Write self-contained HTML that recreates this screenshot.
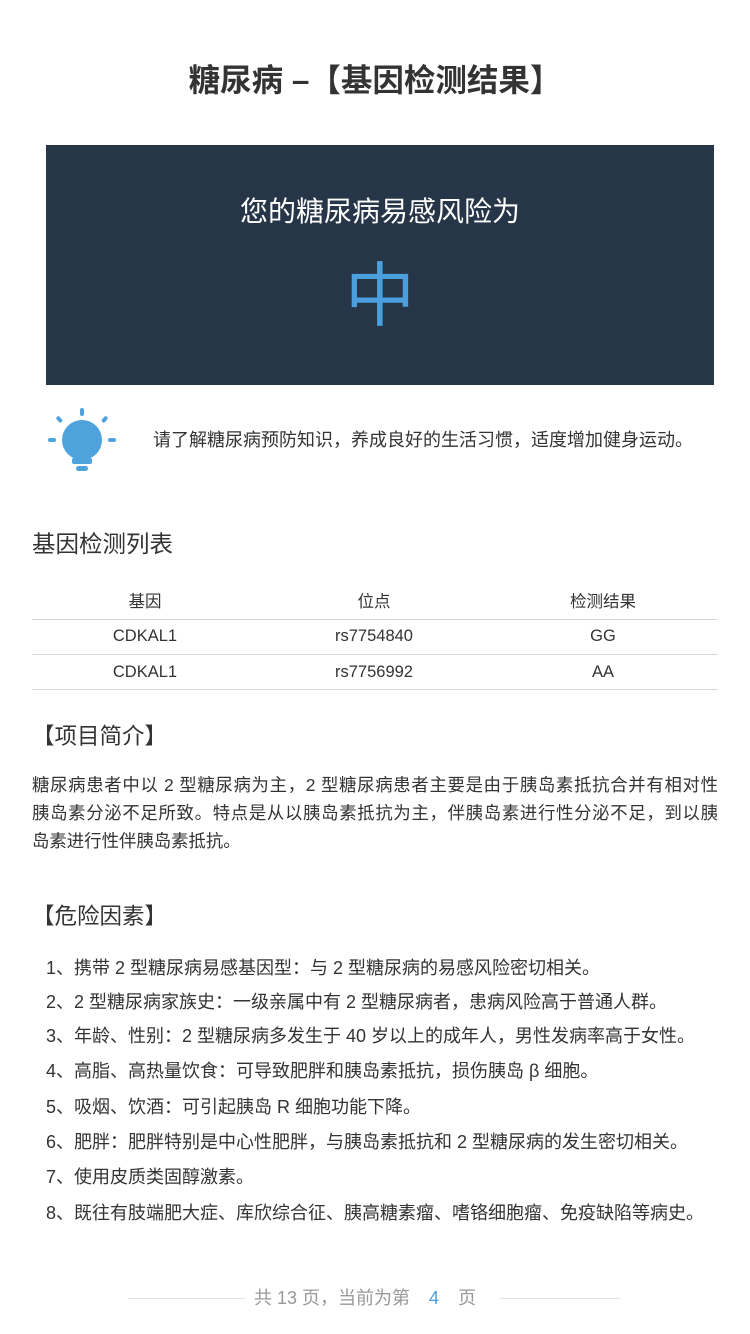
<!DOCTYPE html>
<html><head><meta charset="utf-8"><style>
*{margin:0;padding:0;box-sizing:border-box}
body{width:750px;height:1334px;background:#fff;position:relative;font-family:"Liberation Sans","Noto Sans CJK SC",sans-serif;color:#333;overflow:hidden}
.a{position:absolute;white-space:nowrap}
.box{position:absolute;left:46px;top:145px;width:668px;height:240px;background:#263547}
.jl{position:absolute;left:32px;width:686px;font-size:17.4px;text-align:justify;text-align-last:justify;white-space:nowrap;line-height:28px;color:#333}
.li{position:absolute;left:46px;font-size:18px;line-height:24px;color:#333;white-space:nowrap}
.line{position:absolute;left:32px;width:686px;height:1px;background:#d8d8d8}
.c{position:absolute;font-size:16.5px;text-align:center;width:200px;line-height:22px;color:#333}
</style></head><body>
<div class="a" style="left:0;width:750px;text-align:center;top:61px;font-size:31.5px;font-weight:bold;color:#333;line-height:38px">糖尿病 –【基因检测结果】</div>
<div class="box"></div>
<div class="a" style="left:46px;width:668px;text-align:center;top:194px;font-size:28px;color:#fff;line-height:36px">您的糖尿病易感风险为</div>
<div class="a" style="left:46px;width:668px;text-align:center;top:258px;font-size:70px;color:#4a9fdc;line-height:76px">中</div>
<svg style="position:absolute;left:45px;top:408px" width="72" height="66" viewBox="0 0 72 66">
<g fill="#4fa3dd">
<circle cx="37" cy="32" r="20"/>
<rect x="27" y="50" width="20" height="6" rx="2"/>
<rect x="31" y="58" width="12" height="5" rx="2.5"/>
<rect x="35" y="0" width="4" height="8" rx="2"/>
<rect x="3" y="30" width="8" height="4" rx="2"/>
<rect x="63" y="30" width="8" height="4" rx="2"/>
<rect x="12" y="8" width="4" height="7" rx="2" transform="rotate(-40 14 11)"/>
<rect x="58" y="8" width="4" height="7" rx="2" transform="rotate(40 60 11)"/>
</g></svg>
<div class="a" style="left:153px;top:428px;font-size:18px;line-height:24px;color:#333">请了解糖尿病预防知识，养成良好的生活习惯，适度增加健身运动。</div>
<div class="a" style="left:32px;top:529px;font-size:23.5px;line-height:30px;color:#333">基因检测列表</div>
<div class="c" style="left:45px;top:591px">基因</div>
<div class="c" style="left:274px;top:591px">位点</div>
<div class="c" style="left:503px;top:591px">检测结果</div>
<div class="line" style="top:619px"></div>
<div class="c" style="left:45px;top:625px">CDKAL1</div>
<div class="c" style="left:274px;top:625px">rs7754840</div>
<div class="c" style="left:503px;top:625px">GG</div>
<div class="line" style="top:654px"></div>
<div class="c" style="left:45px;top:661px">CDKAL1</div>
<div class="c" style="left:274px;top:661px">rs7756992</div>
<div class="c" style="left:503px;top:661px">AA</div>
<div class="line" style="top:689px"></div>
<div class="a" style="left:32px;top:723px;font-size:22.5px;line-height:28px">【项目简介】</div>
<div class="jl" style="top:771px">糖尿病患者中以 2 型糖尿病为主，2 型糖尿病患者主要是由于胰岛素抵抗合并有相对性</div>
<div class="jl" style="top:799px">胰岛素分泌不足所致。特点是从以胰岛素抵抗为主，伴胰岛素进行性分泌不足，到以胰</div>
<div class="jl" style="top:827px;text-align-last:left;width:auto">岛素进行性伴胰岛素抵抗。</div>
<div class="a" style="left:32px;top:903px;font-size:22.5px;line-height:28px">【危险因素】</div>
<div class="li" style="top:956px">1、携带 2 型糖尿病易感基因型：与 2 型糖尿病的易感风险密切相关。</div>
<div class="li" style="top:990px">2、2 型糖尿病家族史：一级亲属中有 2 型糖尿病者，患病风险高于普通人群。</div>
<div class="li" style="top:1024px">3、年龄、性别：2 型糖尿病多发生于 40 岁以上的成年人，男性发病率高于女性。</div>
<div class="li" style="top:1059px">4、高脂、高热量饮食：可导致肥胖和胰岛素抵抗，损伤胰岛 β 细胞。</div>
<div class="li" style="top:1095px">5、吸烟、饮酒：可引起胰岛 R 细胞功能下降。</div>
<div class="li" style="top:1130px">6、肥胖：肥胖特别是中心性肥胖，与胰岛素抵抗和 2 型糖尿病的发生密切相关。</div>
<div class="li" style="top:1165px">7、使用皮质类固醇激素。</div>
<div class="li" style="top:1201px">8、既往有肢端肥大症、库欣综合征、胰高糖素瘤、嗜铬细胞瘤、免疫缺陷等病史。</div>
<div style="position:absolute;left:128px;top:1298px;width:117px;height:1px;background:#e3e3e3"></div>
<div style="position:absolute;left:500px;top:1298px;width:120px;height:1px;background:#e3e3e3"></div>
<div class="a" style="left:254px;top:1287px;font-size:18px;line-height:22px;color:#999">共 13 页，当前为第 <span style="color:#4a9fdc;margin:0 14px">4</span> 页</div>
</body></html>
